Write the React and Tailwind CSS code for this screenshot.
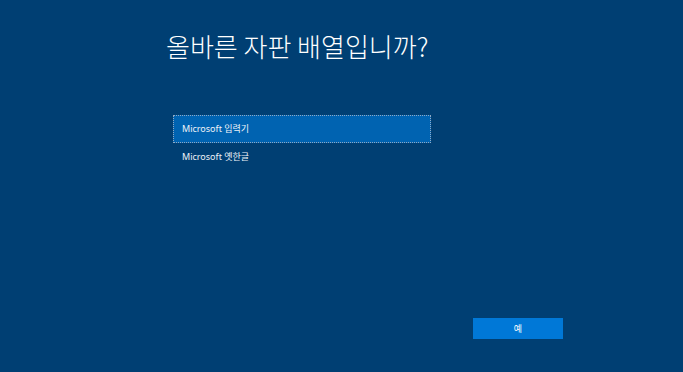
export default function App() {
  const font = { fontFamily: '"Noto Sans", "Noto Sans CJK KR", sans-serif' };
  return (
    <div className="w-[683px] h-[372px] bg-[#003f73] text-white overflow-hidden" style={font}>
      <div className="pl-[166px] pt-[27px]">
        <h1
          className="text-[26px] font-light leading-[38px]"
          style={{ fontFamily: '"Noto Sans CJK KR", sans-serif' }}
        >
          올바른 자판 배열입니까?
        </h1>
      </div>
      <div className="ml-[173px] mt-[50px] w-[258px] flex flex-col">
        <div className="h-[28px] bg-[#0063b1] border border-dotted border-[#8fa9c4] flex items-center pl-[8px] text-[9px] text-[#eef3f8]">
          Microsoft 입력기
        </div>
        <div className="h-[28px] flex items-center pl-[9px] text-[9px] text-[#eef3f8]">Microsoft 옛한글</div>
      </div>
      <div className="ml-[473px] mt-[147px] w-[90px] h-[21px] bg-[#0078d7] flex items-center justify-center text-[9px]">
        예
      </div>
    </div>
  );
}
